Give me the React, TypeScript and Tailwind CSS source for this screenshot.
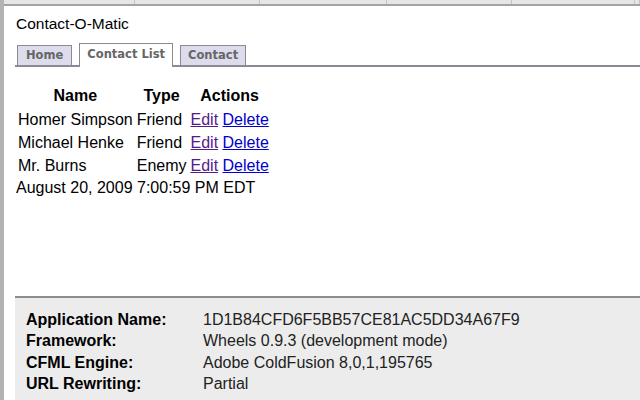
import React from "react";

const segs = [
  "w-[131px]",
  "w-[125px]",
  "w-[127px]",
  "w-[125px]",
  "w-[123px]",
  "flex-1",
];

const rows = [
  { name: "Homer Simpson", type: "Friend" },
  { name: "Michael Henke", type: "Friend" },
  { name: "Mr. Burns", type: "Enemy" },
];

const info = [
  ["Application Name:", "1D1B84CFD6F5BB57CE81AC5DD34A67F9"],
  ["Framework:", "Wheels 0.9.3 (development mode)"],
  ["CFML Engine:", "Adobe ColdFusion 8,0,1,195765"],
  ["URL Rewriting:", "Partial"],
];

export default function App() {
  return (
    <div
      className="w-[640px] h-[400px] overflow-hidden bg-white flex text-black"
      style={{ fontFamily: '"Liberation Sans", Arial, sans-serif' }}
    >
      <div className="w-[4px] shrink-0 bg-[#b3b3b3]" />
      <div className="flex-1 flex flex-col min-w-0">
        {/* top strip */}
        <div className="h-[4px] flex bg-[#e3e3e3] shrink-0">
          {segs.map((s, i) => (
            <div
              key={i}
              className={`${s} h-full border-r border-[#c4c4c4] bg-[#e6e6e6]`}
            />
          ))}
        </div>
        <div className="h-[2px] bg-[#a3a3a3] shrink-0" />

        {/* title */}
        <div className="pl-[12px] pt-[9px] text-[15.5px] leading-[18px] h-[28px] shrink-0">
          Contact-O-Matic
        </div>

        {/* tabs */}
        <div
          className="ml-[11px] mt-[10px] flex items-end gap-[7px] border-b-2 border-[#8a8a92] pl-[2px] h-[23px] shrink-0"
          style={{ fontFamily: '"DejaVu Sans", Verdana, sans-serif' }}
        >
          <div className="h-[20px] px-[8px] bg-[#dcdcec] border border-b-0 border-[#8a8a92] text-[11.5px] font-bold text-[#666666] leading-[19px]">
            Home
          </div>
          <div className="h-[24px] -mb-[2px] px-[7px] bg-white border border-b-0 border-[#8a8a92] text-[11.5px] font-bold text-[#666666] leading-[21px]">
            Contact List
          </div>
          <div className="h-[20px] px-[7px] bg-[#dcdcec] border border-b-0 border-[#8a8a92] text-[11.5px] font-bold text-[#666666] leading-[19px]">
            Contact
          </div>
        </div>

        {/* table */}
        <table className="ml-[11px] mt-[15px] border-separate border-spacing-[2px] text-[16px] leading-[19px] self-start shrink-0">
          <thead>
            <tr className="h-[23px]">
              <th className="text-center font-bold px-[1px] py-0">Name</th>
              <th className="text-center font-bold px-[1px] py-0">Type</th>
              <th className="text-center font-bold px-[1px] py-0">Actions</th>
            </tr>
          </thead>
          <tbody>
            {rows.map((r) => (
              <tr key={r.name} className="h-[21px]">
                <td className="px-[1px] py-0 text-left whitespace-nowrap">{r.name}</td>
                <td className="px-[1px] py-0 text-left whitespace-nowrap">{r.type}</td>
                <td className="px-[1px] py-0 text-left whitespace-nowrap">
                  <a href="#" className="underline text-[#551a8b]">Edit</a>{" "}
                  <a href="#" className="underline text-[#0000cc]">Delete</a>
                </td>
              </tr>
            ))}
          </tbody>
        </table>
        <div className="ml-[12px] text-[16px] leading-[20px] shrink-0">
          August 20, 2009 7:00:59 PM EDT
        </div>

        {/* debug panel */}
        <div className="mt-[98px] ml-[11px] flex-1 bg-[#ececec] border-t-2 border-[#8c8c8c] pt-[11px] pl-[11px]">
          <div className="grid grid-cols-[177px_1fr] text-[16px] leading-[21.3px]">
            {info.map(([k, v]) => (
              <React.Fragment key={k}>
                <div className="font-bold">{k}</div>
                <div className="text-[#222222]">{v}</div>
              </React.Fragment>
            ))}
          </div>
        </div>
      </div>
    </div>
  );
}
